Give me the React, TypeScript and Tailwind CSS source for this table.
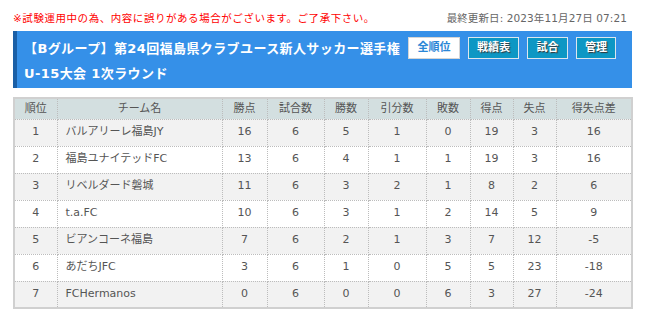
const rows = [
  { rank: 1, team: 'バルアリーレ福島JY', pts: 16, played: 6, win: 5, draw: 1, lose: 0, gf: 19, ga: 3, diff: 16 },
  { rank: 2, team: '福島ユナイテッドFC', pts: 13, played: 6, win: 4, draw: 1, lose: 1, gf: 19, ga: 3, diff: 16 },
  { rank: 3, team: 'リベルダード磐城', pts: 11, played: 6, win: 3, draw: 2, lose: 1, gf: 8, ga: 2, diff: 6 },
  { rank: 4, team: 't.a.FC', pts: 10, played: 6, win: 3, draw: 1, lose: 2, gf: 14, ga: 5, diff: 9 },
  { rank: 5, team: 'ビアンコーネ福島', pts: 7, played: 6, win: 2, draw: 1, lose: 3, gf: 7, ga: 12, diff: -5 },
  { rank: 6, team: 'あだちJFC', pts: 3, played: 6, win: 1, draw: 0, lose: 5, gf: 5, ga: 23, diff: -18 },
  { rank: 7, team: 'FCHermanos', pts: 0, played: 6, win: 0, draw: 0, lose: 6, gf: 3, ga: 27, diff: -24 },
];

const headers = ['順位', 'チーム名', '勝点', '試合数', '勝数', '引分数', '敗数', '得点', '失点', '得失点差'];
const widths = ['w-[43px]', 'w-[165px]', 'w-[45px]', 'w-[57px]', 'w-[44px]', 'w-[58px]', 'w-[44px]', 'w-[43px]', 'w-[43px]', 'w-[76px]'];

const App = () => {
  return (
    <div className="w-[646px] h-[315px] bg-white px-[13px] pt-[11px] font-['DejaVu_Sans','Noto_Sans_CJK_JP',sans-serif]">
      <div className="flex items-center justify-between h-[15px] pr-[6px]">
        <p className="text-[10.5px] text-[#ff0000] tracking-[0.55px]">※試験運用中の為、内容に誤りがある場合がございます。ご了承下さい。</p>
        <p className="text-[10.5px] text-[#666] tracking-[0.1px]">最終更新日: 2023年11月27日 07:21</p>
      </div>

      {/* title bar */}
      <div className="mt-[5px] h-[57px] w-[619px] bg-[#3590e8] border-l-4 border-[#1a5fa6] flex justify-between pl-[7px] pr-[16px] pt-[5px]">
        <div className="text-white font-bold text-[13px] leading-[25px] tracking-[0.4px]">
          <p>【Bグループ】第24回福島県クラブユース新人サッカー選手権</p>
          <p>U-15大会 1次ラウンド</p>
        </div>
        <div className="flex gap-[8px] pt-[1px]">
          <button className="h-[22px] w-[52px] bg-white border border-[#d5d5d5] text-[#2a86d6] text-[11px] font-bold">全順位</button>
          <button className="h-[22px] w-[51px] bg-[#0d97c4] border border-[#dde6ee] text-white text-[11px] font-bold [text-shadow:1px_1px_1px_#333]">戦績表</button>
          <button className="h-[22px] w-[41px] bg-[#0d97c4] border border-[#dde6ee] text-white text-[11px] font-bold [text-shadow:1px_1px_1px_#333]">試合</button>
          <button className="h-[22px] w-[40px] bg-[#0d97c4] border border-[#dde6ee] text-white text-[11px] font-bold [text-shadow:1px_1px_1px_#333]">管理</button>
        </div>
      </div>

      {/* standings */}
      <table className="mt-[9px] w-[619px] border-collapse table-fixed border-2 border-solid border-[#d0d0d0] text-[11px] text-[#555]">
        <thead>
          <tr className="h-[21px] bg-[#d3dfe0]">
            {headers.map((h, i) => (
              <th key={h} className={`${widths[i]} font-normal text-[#555] border-x border-b border-dotted border-[#bcbcbc]`}>{h}</th>
            ))}
          </tr>
        </thead>
        <tbody>
          {rows.map((r, idx) => (
            <tr key={r.rank} className={`h-[27px] ${idx % 2 === 0 ? 'bg-[#f2f2f2]' : 'bg-white'}`}>
              <td className="text-center border border-dotted border-[#bcbcbc]">{r.rank}</td>
              <td className="text-left pl-[8px] border border-dotted border-[#bcbcbc]">{r.team}</td>
              <td className="text-center border border-dotted border-[#bcbcbc]">{r.pts}</td>
              <td className="text-center border border-dotted border-[#bcbcbc]">{r.played}</td>
              <td className="text-center border border-dotted border-[#bcbcbc]">{r.win}</td>
              <td className="text-center border border-dotted border-[#bcbcbc]">{r.draw}</td>
              <td className="text-center border border-dotted border-[#bcbcbc]">{r.lose}</td>
              <td className="text-center border border-dotted border-[#bcbcbc]">{r.gf}</td>
              <td className="text-center border border-dotted border-[#bcbcbc]">{r.ga}</td>
              <td className="text-center border border-dotted border-[#bcbcbc]">{r.diff}</td>
            </tr>
          ))}
        </tbody>
      </table>
    </div>
  );
};

export default App;
